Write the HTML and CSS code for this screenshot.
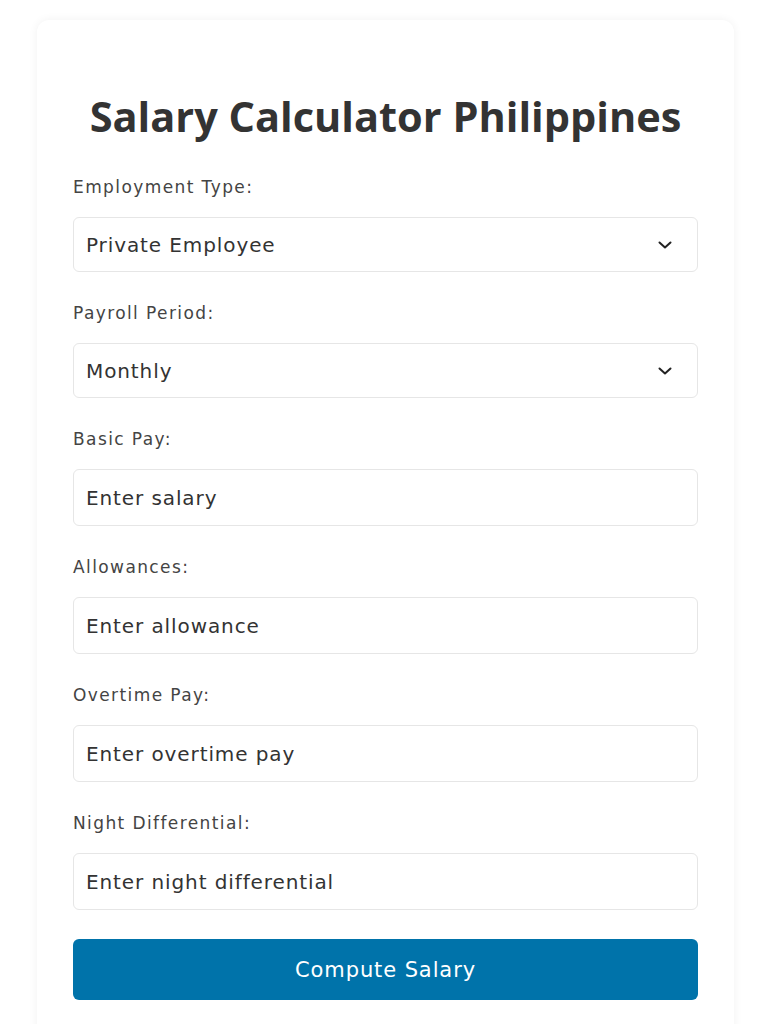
FILE: index.html
```html
<!DOCTYPE html>
<html lang="en">
<head>
<meta charset="utf-8">
<title>Salary Calculator Philippines</title>
<link rel="stylesheet" href="styles.css">
</head>
<body>
<main class="card">
  <h1 class="title">Salary Calculator Philippines</h1>
  <form class="form">
    <div class="field">
      <label class="label">Employment Type:</label>
      <div class="select">
        <span class="select-value">Private Employee</span>
        <svg class="chev" viewBox="0 0 14 8" width="14" height="8"><path d="M1.5 1.5 L7 6.5 L12.5 1.5" fill="none" stroke="#222" stroke-width="2" stroke-linecap="round" stroke-linejoin="round"/></svg>
      </div>
    </div>
    <div class="field">
      <label class="label">Payroll Period:</label>
      <div class="select">
        <span class="select-value">Monthly</span>
        <svg class="chev" viewBox="0 0 14 8" width="14" height="8"><path d="M1.5 1.5 L7 6.5 L12.5 1.5" fill="none" stroke="#222" stroke-width="2" stroke-linecap="round" stroke-linejoin="round"/></svg>
      </div>
    </div>
    <div class="field">
      <label class="label">Basic Pay:</label>
      <div class="input">Enter salary</div>
    </div>
    <div class="field">
      <label class="label">Allowances:</label>
      <div class="input">Enter allowance</div>
    </div>
    <div class="field">
      <label class="label">Overtime Pay:</label>
      <div class="input">Enter overtime pay</div>
    </div>
    <div class="field">
      <label class="label">Night Differential:</label>
      <div class="input">Enter night differential</div>
    </div>
    <div class="button">Compute Salary</div>
  </form>
</main>
</body>
</html>
```

FILE: styles.css
```css
html, body {
  margin: 0;
  padding: 0;
  background: #ffffff;
  font-family: "DejaVu Sans", "Open Sans", sans-serif;
  color: #333;
}
.card {
  width: 697px;
  margin: 20px 0 0 37px;
  box-sizing: border-box;
  padding: 72px 36px 40px;
  background: #fff;
  border-radius: 12px;
  box-shadow: 0 0 10px rgba(0,0,0,0.06);
}
.title {
  margin: 0 0 34px;
  text-align: center;
  font-family: "Open Sans", sans-serif;
  font-size: 41.5px;
  line-height: 48px;
  font-weight: 700;
  color: #333;
}
.form {
  display: flex;
  flex-direction: column;
  gap: 28px;
}
.field {
  display: flex;
  flex-direction: column;
  gap: 17px;
}
.label {
  font-size: 17px;
  line-height: 26px;
  letter-spacing: 1.4px;
  color: #444;
}
.select, .input {
  box-sizing: border-box;
  border: 1px solid #e6e6e6;
  border-radius: 6px;
  background: #fff;
  padding: 0 12px;
  display: flex;
  align-items: center;
  justify-content: space-between;
  font-size: 20px;
  letter-spacing: 0.9px;
  color: #333;
}
.select { height: 55px; }
.input { height: 57px; }
.chev { margin-right: 13px; }
.button {
  margin-top: 1px;
  height: 61px;
  border-radius: 6px;
  background: #0073aa;
  color: #fff;
  font-size: 21px;
  letter-spacing: 0.9px;
  display: flex;
  align-items: center;
  justify-content: center;
}
```
